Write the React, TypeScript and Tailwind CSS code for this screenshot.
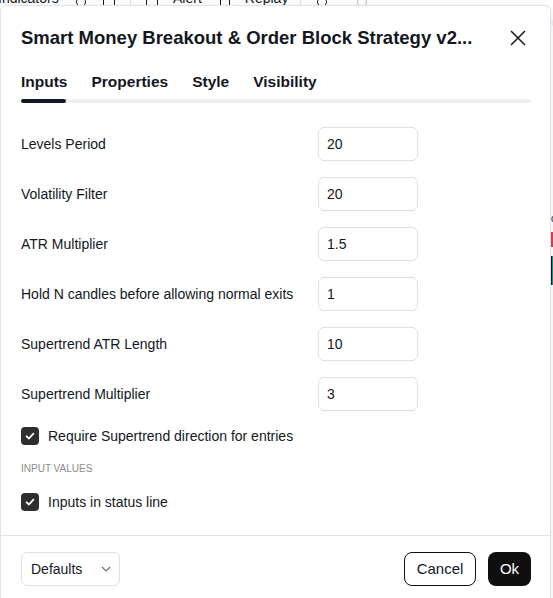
import React from "react";

const rows: [string, string][] = [
  ["Levels Period", "20"],
  ["Volatility Filter", "20"],
  ["ATR Multiplier", "1.5"],
  ["Hold N candles before allowing normal exits", "1"],
  ["Supertrend ATR Length", "10"],
  ["Supertrend Multiplier", "3"],
];

function Check() {
  return (
    <span className="flex h-[18px] w-[18px] shrink-0 items-center justify-center rounded-[4px] bg-[#2e2e2e]">
      <svg width="12" height="12" viewBox="0 0 12 12">
        <path
          d="M2.6 6.3 L5 8.5 L9.4 3.7"
          fill="none"
          stroke="white"
          strokeWidth="1.8"
          strokeLinecap="round"
          strokeLinejoin="round"
        />
      </svg>
    </span>
  );
}

export default function App() {
  return (
    <div className="relative h-[598px] w-[553px] overflow-hidden bg-white font-['Liberation_Sans',Arial,sans-serif] text-[#131722]">
      {/* background toolbar (mostly hidden behind dialog) */}
      <div className="h-[5px] overflow-hidden">
        <div className="-mt-[10px] flex h-[17px] items-end text-[14px] leading-[17px] text-[#131722]">
          <span className="-ml-[2px] w-[70px]">Indicators</span>
          <span className="ml-[8px] h-[10px] w-[10px] rounded-full border border-[#131722]" />
          <span className="ml-[17px] h-[10px] w-[12px] border border-[#131722]" />
          <span className="ml-[15px] h-[17px] w-px bg-[#e0e3eb]" />
          <span className="ml-[15px] h-[10px] w-[12px] border border-[#131722]" />
          <span className="ml-[15px]">Alert</span>
          <span className="ml-[18px] h-[10px] w-[10px] border border-[#131722]" />
          <span className="ml-[15px]">Replay</span>
          <span className="ml-[12px] h-[17px] w-px bg-[#e0e3eb]" />
          <span className="ml-[16px] h-[10px] w-[10px] rounded-full border border-[#131722]" />
          <span className="ml-[30px] h-[10px] w-[10px] rounded-full border border-[#b2b5be]" />
        </div>
      </div>

      {/* chart fragments at right edge */}
      <div className="absolute left-[550px] top-[20px] h-[6px] w-[3px] bg-[#f0f3fa]" />
      <div className="absolute left-[551px] top-[214px] text-[10px] leading-[10px] text-[#131722]">c</div>
      <div className="absolute left-[551px] top-[232px] h-[15px] w-[2px] bg-[#f23645]" />
      <div className="absolute left-[551px] top-[256px] h-[29px] w-[2px] border-l border-[#131722] bg-[#089981]" />

      {/* dialog */}
      <div className="absolute left-0 top-[5px] flex h-[620px] w-[551px] flex-col rounded-[6px] border border-[#e0e3eb] bg-white shadow-[0_2px_10px_rgba(0,0,0,0.10)]">
        {/* header */}
        <div className="flex items-center pl-5 pr-[24px] pt-[18px]">
          <div className="min-w-0 flex-1 truncate text-[18.5px] font-bold leading-[28px]">
            Smart Money Breakout &amp; Order Block Strategy v2...
          </div>
          <button className="ml-[20px] flex h-[16px] w-[16px] items-center justify-center text-[#131722]">
            <svg width="16" height="16" viewBox="0 0 16 16">
              <path d="M1 1 L15 15 M15 1 L1 15" stroke="currentColor" strokeWidth="1.5" fill="none" />
            </svg>
          </button>
        </div>

        {/* tabs */}
        <div className="mt-[20px] pl-5 pr-[19px]">
          <div className="flex gap-[24px] text-[15.5px] font-bold leading-[20px]">
            <span>Inputs</span>
            <span>Properties</span>
            <span>Style</span>
            <span>Visibility</span>
          </div>
          <div className="mt-[7px] h-[4px] rounded-full bg-[#f0f0f0]">
            <div className="h-full w-[45px] rounded-full bg-[#131722]" />
          </div>
        </div>

        {/* content */}
        <div className="mt-[24px] flex flex-col pl-5 pr-[19px]">
          <div className="flex flex-col gap-4">
            {rows.map(([label, value]) => (
              <div key={label} className="flex h-[34px] items-center">
                <div className="w-[297px] text-[14px] leading-[18px]">{label}</div>
                <div className="flex h-[34px] w-[100px] items-center rounded-[6px] border border-[#e0e0e0] px-[8px] text-[14px]">
                  {value}
                </div>
              </div>
            ))}
          </div>

          <div className="mt-4 flex h-[18px] items-center gap-[9px] text-[14px]">
            <Check />
            <span>Require Supertrend direction for entries</span>
          </div>

          <div className="mt-4 text-[10px] leading-[16px] text-[#8c8c8c]">INPUT VALUES</div>

          <div className="mt-4 flex h-[18px] items-center gap-[9px] text-[14px]">
            <Check />
            <span>Inputs in status line</span>
          </div>
        </div>

        {/* footer */}
        <div className="mt-[24px] flex items-center border-t border-[#e0e3eb] pl-5 pr-[19px] pt-4">
          <div className="flex h-[34px] w-[99px] items-center justify-between rounded-[6px] border border-[#e0e0e0] pl-[9px] pr-[8px] text-[14px]">
            <span>Defaults</span>
            <svg width="10" height="6" viewBox="0 0 10 6">
              <path d="M1 1 L5 5 L9 1" fill="none" stroke="#6a6d78" strokeWidth="1.2" />
            </svg>
          </div>
          <div className="flex-1" />
          <button className="flex h-[34px] w-[72px] items-center justify-center rounded-[8px] border border-[#0f0f0f] text-[15px]">
            Cancel
          </button>
          <button className="ml-[12px] flex h-[34px] w-[43px] items-center justify-center rounded-[8px] bg-[#0f0f0f] text-[15px] text-white">
            Ok
          </button>
        </div>
      </div>
    </div>
  );
}
